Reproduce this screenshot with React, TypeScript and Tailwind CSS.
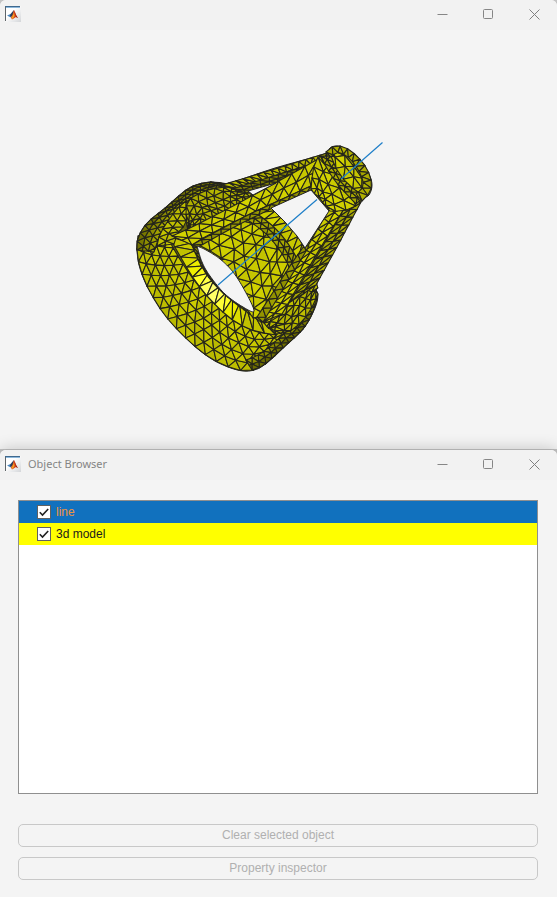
import { useId, useState } from "react";

type Pt = [number, number];

/* ---------- mesh helpers ---------- */

function smooth(points: Pt[], steps = 12): Pt[] {
  const out: Pt[] = [];
  for (let i = 0; i < points.length - 1; i++) {
    const a = points[Math.max(0, i - 1)];
    const b = points[i];
    const c = points[i + 1];
    const d = points[Math.min(points.length - 1, i + 2)];
    for (let s = 0; s < steps; s++) {
      const t = s / steps;
      const at = (k: 0 | 1) =>
        0.5 *
        (2 * b[k] +
          (c[k] - a[k]) * t +
          (2 * a[k] - 5 * b[k] + 4 * c[k] - d[k]) * t * t +
          (3 * b[k] - a[k] - 3 * c[k] + d[k]) * t * t * t);
      out.push([at(0), at(1)]);
    }
  }
  out.push(points[points.length - 1]);
  return out;
}

function sampler(points: Pt[]) {
  const line = points.length > 2 ? smooth(points) : points;
  const lengths = [0];
  for (let i = 1; i < line.length; i++) {
    lengths.push(lengths[i - 1] + Math.hypot(line[i][0] - line[i - 1][0], line[i][1] - line[i - 1][1]));
  }
  const total = lengths[lengths.length - 1];
  return (u: number): Pt => {
    const want = Math.min(1, Math.max(0, u)) * total;
    let i = 1;
    while (i < line.length - 1 && lengths[i] < want) i++;
    const t = (want - lengths[i - 1]) / (lengths[i] - lengths[i - 1] || 1);
    return [
      line[i - 1][0] + (line[i][0] - line[i - 1][0]) * t,
      line[i - 1][1] + (line[i][1] - line[i - 1][1]) * t,
    ];
  };
}

function noise(n: number) {
  const v = Math.sin(n * 127.1 + 11.7) * 43758.5453;
  return v - Math.floor(v);
}

interface Patch {
  from: Pt[];
  to: Pt[];
  rows: number;
  cols: number;
  light?: number;
  jitter?: number;
  glow?: Pt;
  fall?: number;
}

interface Facet {
  points: string;
  fill: string;
}

function facets(patch: Patch, seed: number): Facet[] {
  const { rows, cols, light = 198, jitter = 0, glow, fall = 0 } = patch;
  const a = sampler(patch.from);
  const b = sampler(patch.to);
  const at = (row: number, col: number): Pt => {
    const u = row % 2 ? (col - 0.5) / cols : col / cols;
    const p = a(u);
    const q = b(u);
    const v = row / rows;
    const edge = row === 0 || row === rows;
    const n = seed * 997 + row * 53 + col;
    const j = edge ? 0 : jitter;
    return [
      p[0] + (q[0] - p[0]) * v + (noise(n) - 0.5) * j,
      p[1] + (q[1] - p[1]) * v + (noise(n + 0.5) - 0.5) * j,
    ];
  };
  const out: Facet[] = [];
  const add = (pts: Pt[], n: number, v: number) => {
    const cx = (pts[0][0] + pts[1][0] + pts[2][0]) / 3;
    const cy = (pts[0][1] + pts[1][1] + pts[2][1]) / 3;
    let level = light - fall * (1 - v) + (noise(n + seed) - 0.5) * 16;
    let blue = 0;
    if (glow) {
      const d = Math.hypot(cx - glow[0], cy - glow[1]);
      const g = Math.max(0, 1 - d / 46);
      level += g * 100;
      blue = Math.max(0, (g - 0.45) * 240);
    }
    const l = Math.min(255, Math.round(level));
    out.push({
      points: pts.map((p) => `${p[0].toFixed(1)},${p[1].toFixed(1)}`).join(" "),
      fill: `rgb(${l},${l},${Math.round(blue)})`,
    });
  };
  for (let r = 0; r < rows; r++) {
    const odd = r % 2 === 1;
    for (let c = 0; c <= cols; c++) {
      const n = r * 71 + c * 3;
      const v = (r + 0.5) / rows;
      if (odd) {
        add([at(r, c), at(r, c + 1), at(r + 1, c)], n, v);
        if (c < cols) add([at(r, c + 1), at(r + 1, c), at(r + 1, c + 1)], n + 1, v);
      } else {
        add([at(r, c), at(r + 1, c), at(r + 1, c + 1)], n, v);
        if (c < cols) add([at(r, c), at(r, c + 1), at(r + 1, c + 1)], n + 1, v);
      }
    }
  }
  return out;
}

/* ---------- the part: ring, back wall, three struts and hub ---------- */

const silhouette: Pt[] = [
  [137, 250], [138, 238], [147, 223], [165, 208], [186, 190], [199, 184], [213, 182], [226, 184],
  [275, 168], [324, 154], [330, 148], [338, 146], [350, 151], [361, 161], [369, 174], [372, 185],
  [369, 195], [360, 203], [339, 243], [317, 283], [318, 295], [315, 308], [304, 328], [284, 347],
  [264, 365], [254, 370], [243, 371], [228, 367], [210, 358], [190, 342], [165, 315], [147, 286],
  [139, 265], [137, 250],
];

const patches: Patch[] = [
  // outside of the ring
  {
    from: [[138, 236], [137, 252], [141, 271], [150, 292], [167, 318], [190, 342], [212, 359], [232, 368], [248, 371], [264, 365], [284, 347], [303, 329]],
    to: [[164, 226], [169, 240], [178, 256], [191, 276], [208, 297], [230, 318], [247, 328], [262, 333], [278, 333], [290, 327], [298, 320]],
    rows: 5, cols: 20, light: 202, fall: 14, jitter: 1,
  },
  // chamfer that catches the light
  {
    from: [[164, 226], [171, 240], [180, 256], [192, 276], [208, 297], [230, 318], [252, 330], [276, 335]],
    to: [[184, 232], [190, 242], [197, 253], [205, 268], [217, 284], [232, 298], [249, 310], [264, 322]],
    rows: 1, cols: 14, light: 196, glow: [214, 290],
  },
  // lip of the bore
  {
    from: [[190, 240], [194, 250], [202, 267], [214, 284], [230, 299], [247, 312], [261, 322]],
    to: [[197, 245], [202, 262], [210, 276], [225, 294], [243, 307], [263, 318]],
    rows: 1, cols: 16, light: 140,
  },
  // shaded turn of the lower edge
  {
    from: [[317, 298], [313, 312], [303, 329], [284, 347], [264, 365], [252, 370]],
    to: [[306, 302], [302, 313], [293, 325], [277, 340], [260, 354], [246, 360]],
    rows: 2, cols: 13, light: 160, fall: 70, jitter: 1,
  },
  // upper left side
  {
    from: [[137, 250], [138, 238], [147, 223], [165, 208], [186, 190], [199, 184], [213, 182], [228, 184]],
    to: [[154, 252], [159, 238], [168, 222], [178, 209], [189, 200], [203, 192], [220, 188], [236, 189]],
    rows: 3, cols: 14, light: 172, fall: 70, jitter: 1,
  },
  {
    from: [[157, 246], [160, 234], [168, 221], [177, 209], [186, 201]],
    to: [[174, 244], [178, 233], [184, 226], [187, 219], [190, 208]],
    rows: 2, cols: 6, light: 188, jitter: 1,
  },
  // upper boss
  {
    from: [[188, 232], [186, 214], [188, 201], [200, 193], [212, 189], [228, 187], [250, 189]],
    to: [[190, 231], [196, 227], [205, 222], [215, 217], [225, 212], [238, 206], [254, 197]],
    rows: 4, cols: 11, light: 178, jitter: 3,
  },
  // back wall of the bore
  {
    from: [[197, 244], [215, 235], [235, 224], [252, 214]],
    to: [[253, 318], [266, 316], [282, 292], [296, 262]],
    rows: 8, cols: 5, light: 202, jitter: 4,
  },
  // shaded groove and far rim of the back wall
  {
    from: [[246, 219], [264, 232], [279, 249], [291, 270]],
    to: [[256, 213], [273, 226], [287, 242], [298, 260]],
    rows: 2, cols: 8, light: 160, jitter: 1,
  },
  {
    from: [[256, 213], [273, 226], [287, 242], [298, 260]],
    to: [[272, 208], [285, 219], [296, 233], [304, 248]],
    rows: 1, cols: 6, light: 204,
  },
  // rear strut
  {
    from: [[222, 185], [275, 169], [327, 153]],
    to: [[236, 190], [280, 174], [326, 160]],
    rows: 1, cols: 15, light: 184,
  },
  {
    from: [[232, 189], [280, 174], [326, 160]],
    to: [[246, 193], [282, 181], [324, 166]],
    rows: 2, cols: 10, light: 124, jitter: 1,
  },
  // left strut
  {
    from: [[172, 236], [190, 228], [250, 197], [318, 159]],
    to: [[192, 245], [205, 237], [250, 214], [311, 186]],
    rows: 2, cols: 11, light: 204, jitter: 1,
  },
  {
    from: [[192, 245], [244, 217], [311, 186]],
    to: [[198, 247], [246, 221], [312, 190]],
    rows: 1, cols: 12, light: 150,
  },
  // lower right boss
  {
    from: [[264, 323], [278, 310], [292, 290], [314, 276]],
    to: [[276, 334], [292, 330], [308, 314], [318, 294]],
    rows: 5, cols: 6, light: 184, jitter: 3,
  },
  // right strut
  {
    from: [[262, 322], [296, 266], [330, 208]],
    to: [[282, 314], [312, 262], [345, 207]],
    rows: 2, cols: 11, light: 204, jitter: 1,
  },
  {
    from: [[290, 302], [316, 258], [345, 207]],
    to: [[316, 285], [338, 245], [361, 202]],
    rows: 2, cols: 11, light: 168, jitter: 1,
  },
  {
    from: [[257, 317], [290, 266], [304, 246]],
    to: [[263, 322], [296, 268], [309, 246]],
    rows: 1, cols: 8, light: 150,
  },
  // hub
  {
    from: [[318, 157], [314, 166], [312, 178], [311, 189]],
    to: [[360, 203], [352, 208], [342, 211], [330, 211]],
    rows: 5, cols: 3, light: 204, jitter: 2,
  },
  {
    from: [[321, 156], [329, 172], [340, 187], [356, 204]],
    to: [[331, 156], [338, 169], [349, 184], [364, 197]],
    rows: 2, cols: 7, light: 170, jitter: 1,
  },
  {
    from: [[331, 156], [338, 172], [350, 186], [364, 196]],
    to: [[334, 148], [348, 150], [364, 164], [371, 186]],
    rows: 3, cols: 4, light: 202, jitter: 2,
  },
  {
    from: [[326, 152], [332, 147], [340, 146], [351, 151], [363, 163], [370, 176], [371, 190], [362, 201]],
    to: [[331, 157], [335, 153], [341, 153], [349, 158], [357, 168], [362, 178], [363, 187], [356, 194]],
    rows: 1, cols: 11, light: 172,
  },
];

const mesh: Facet[] = patches.flatMap((patch, i) => facets(patch, i + 1));

const openings: Pt[][] = [
  smooth([[197, 246], [206, 250], [220, 259], [233, 272], [245, 291], [254, 311], [243, 307], [225, 294], [210, 276], [202, 262], [197, 246]]),
  [[311, 190], [329, 211], [305, 248], [297, 236], [285, 222], [271, 208]],
  [[248, 191], [276, 183], [253, 195]],
];

const asPoints = (pts: Pt[]) => pts.map((p) => p.join(",")).join(" ");

function Model() {
  return (
    <svg viewBox="0 30 557 419" className="block h-auto w-full" role="img" aria-label="3d model">
      <polygon points={asPoints(smooth(silhouette, 4))} fill="#6a6a0a" stroke="#222" />
      <g stroke="#24241c" strokeWidth="1.100" strokeLinejoin="round">
        {mesh.map((facet, i) => (
          <polygon key={i} points={facet.points} fill={facet.fill} />
        ))}
      </g>
      <g fill="#f4f4f4" stroke="#222" strokeWidth="1">
        {openings.map((pts, i) => (
          <polygon key={i} points={asPoints(pts)} />
        ))}
      </g>
      <path d="M382.500 142.500L341 179M317 199.500L218 285" stroke="#1f7fc8" strokeWidth="1.200" fill="none" />
    </svg>
  );
}

/* ---------- window chrome ---------- */

function AppIcon() {
  const id = useId();
  return (
    <svg viewBox="0 0 16 16" className="size-4 shrink-0" aria-hidden="true">
      <defs>
        <linearGradient id={id} x1="0" y1="0" x2="1" y2="1">
          <stop offset="0.4" stopColor="#fff" />
          <stop offset="1" stopColor="#d4d6d9" />
        </linearGradient>
      </defs>
      <rect width="16" height="16" fill={`url(#${id})`} />
      <path d="M0 0h15v1H0z" fill="#3f698f" />
      <path d="M1 1h14v1H1z" fill="#8eb9dc" />
      <path d="M0 1h1v14H0z" fill="#5e6468" />
      <path d="M2 9.500L5.500 8L7 9L5.500 11.500L4.300 10.800z" fill="#4a86bd" />
      <path d="M5.500 8L8.500 4.500L9 4L8.600 8L6 11.300L5 10z" fill="#28405e" />
      <path d="M9 4C10 5 10.800 9 13 12L11 11L8.700 12.500L7 13.500L5.800 11.300C8 9.500 8 6 9 4z" fill="#d8471c" />
      <path d="M8.800 6.500L9.500 10L7.500 13L6.500 11.500C8 10.500 8.300 8 8.800 6.500z" fill="#f4a723" />
      <path d="M9.600 5.500C10.500 8 11.300 10 13 12L11 11z" fill="#8c1d12" />
    </svg>
  );
}

function TitleBar({ title }: { title?: string }) {
  const control = "flex h-full w-[46px] items-center justify-center";
  return (
    <header className="flex h-[30px] items-center rounded-t-md bg-[#f2f2f2] pb-[2px] pl-[5px]">
      <AppIcon />
      <h1 className="ml-[7px] flex-1 font-['Noto_Sans','Open_Sans',sans-serif] text-[11px] text-[#858585]">{title}</h1>
      <button type="button" aria-label="Minimize" className={control}>
        <svg viewBox="0 0 11 11" className="size-[11px]" stroke="#868686">
          <path d="M0.500 5.500h10" />
        </svg>
      </button>
      <button type="button" aria-label="Maximize" className={control}>
        <svg viewBox="0 0 11 11" className="size-[11px]" stroke="#868686" fill="none">
          <rect x="0.5" y="0.5" width="9" height="9" rx="1" />
        </svg>
      </button>
      <button type="button" aria-label="Close" className={control}>
        <svg viewBox="0 0 11 11" className="size-[11px]" stroke="#808080">
          <path d="M0.500 0.500l10 10M10.500 0.500l-10 10" />
        </svg>
      </button>
    </header>
  );
}

/* ---------- object list ---------- */

function ObjectRow({ label, selected }: { label: string; selected?: boolean }) {
  const [checked, setChecked] = useState(true);
  return (
    <li className={selected ? "bg-[#1171be]" : "bg-[#ffff00]"}>
      <label
        className={`flex h-[22px] items-center gap-[5px] pl-[18px] text-xs ${selected ? "text-[#ee9340]" : "text-[#1c1c1c]"}`}
      >
        <span className="grid size-[14px] shrink-0">
          <input
            type="checkbox"
            checked={checked}
            onChange={(e) => setChecked(e.target.checked)}
            className="col-start-1 row-start-1 size-[14px] appearance-none border border-[#616161] bg-white"
          />
          {checked && (
            <svg
              viewBox="0 0 14 14"
              className="pointer-events-none col-start-1 row-start-1 size-[14px]"
              fill="none"
              stroke="#212121"
              strokeWidth="1.600"
            >
              <path d="M2.800 7.300l2.700 2.700l5.700-6" />
            </svg>
          )}
        </span>
        {label}
      </label>
    </li>
  );
}

function ActionButton({ children }: { children: string }) {
  return (
    <button
      type="button"
      disabled
      className="flex h-[23px] items-center justify-center rounded-[5px] border border-[#c8c8c8] pb-[2px] text-xs text-[#b0b0b0]"
    >
      {children}
    </button>
  );
}

export default function App() {
  return (
    <div className="flex min-h-screen flex-col bg-[#c4c4c4] font-['Liberation_Sans',Arial,sans-serif]">
      <section aria-label="Figure" className="rounded-t-md bg-[#f4f4f4]">
        <TitleBar />
        <Model />
      </section>
      <section
        aria-label="Object Browser"
        className="relative grow rounded-t-md border-t border-[#b0b0b0] bg-[#f4f4f4] shadow-[0_0_16px_rgba(0,0,0,0.2)]"
      >
        <TitleBar title="Object Browser" />
        <div className="flex flex-col pt-5 pr-[19px] pb-[17px] pl-[18px]">
          <ul className="h-[294px] border border-[#8f8f8f] bg-white">
            <ObjectRow label="line" selected />
            <ObjectRow label="3d model" />
          </ul>
          <div className="mt-[30px] flex flex-col gap-[10px]">
            <ActionButton>Clear selected object</ActionButton>
            <ActionButton>Property inspector</ActionButton>
          </div>
        </div>
      </section>
    </div>
  );
}
